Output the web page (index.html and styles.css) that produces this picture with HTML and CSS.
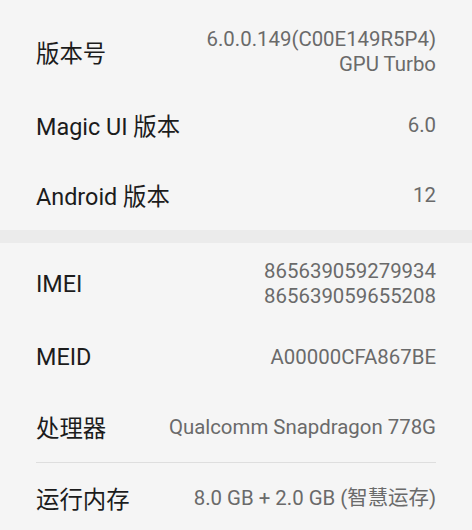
FILE: index.html
```html
<!DOCTYPE html>
<html lang="zh-CN">
<head>
<meta charset="utf-8">
<title>关于手机</title>
<link rel="stylesheet" href="styles.css">
</head>
<body>
  <main class="page">
    <section class="group group-first">
      <div class="row tall">
        <span class="label">版本号</span>
        <div class="value">
          <span>6.0.0.149(C00E149R5P4)</span>
          <span>GPU Turbo</span>
        </div>
      </div>
      <div class="row">
        <span class="label">Magic UI 版本</span>
        <div class="value"><span>6.0</span></div>
      </div>
      <div class="row">
        <span class="label">Android 版本</span>
        <div class="value"><span>12</span></div>
      </div>
    </section>
    <div class="band"></div>
    <section class="group group-second">
      <div class="row tall">
        <span class="label">IMEI</span>
        <div class="value">
          <span>865639059279934</span>
          <span>865639059655208</span>
        </div>
      </div>
      <div class="row">
        <span class="label">MEID</span>
        <div class="value"><span>A00000CFA867BE</span></div>
      </div>
      <div class="row">
        <span class="label">处理器</span>
        <div class="value"><span>Qualcomm Snapdragon 778G</span></div>
      </div>
      <div class="divider"></div>
      <div class="row">
        <span class="label">运行内存</span>
        <div class="value"><span>8.0 GB + 2.0 GB (智慧运存)</span></div>
      </div>
    </section>
  </main>
</body>
</html>
```
FILE: styles.css
```css
html, body {
  margin: 0;
  padding: 0;
  background: #f5f5f5;
}
body {
  font-family: Roboto, "Noto Sans CJK SC", sans-serif;
  width: 472px;
  height: 530px;
  overflow: hidden;
}
.page {
  display: flex;
  flex-direction: column;
}
.group {
  display: flex;
  flex-direction: column;
  padding: 0 36px;
}
.group-first {
  padding-top: 14px;
}
.group-second {
  padding-top: 3px;
}
.row {
  display: flex;
  align-items: center;
  justify-content: space-between;
  min-height: 70px;
  gap: 16px;
}
.row.tall {
  min-height: 76px;
}
.label {
  font-size: 23.4px;
  color: #1c1c1c;
  white-space: nowrap;
}
.value {
  display: flex;
  flex-direction: column;
  align-items: flex-end;
  font-size: 20.4px;
  line-height: 25px;
  color: #6a6a6a;
  text-align: right;
  white-space: nowrap;
}
.band {
  height: 13px;
  background: #ebebeb;
}
.divider {
  height: 1px;
  background: #dedede;
}
```
